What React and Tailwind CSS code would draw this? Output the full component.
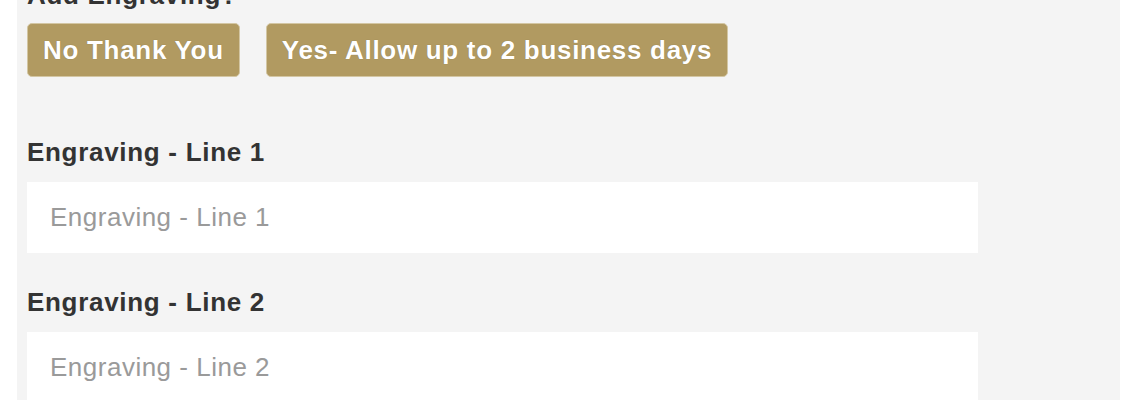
import React from 'react';

const EngravingField = ({ label }) => (
  <div className="mb-[34px]">
    <label className="block text-[26px] leading-[30px] font-bold tracking-[0.7px] text-[#333333] mb-[15px]">{label}</label>
    <input
      type="text"
      placeholder={label}
      className="block w-[951px] h-[71px] bg-white pl-[23px] text-[26px] tracking-[0.5px] text-[#555] placeholder:text-[#9a9a9a] outline-none"
    />
  </div>
);

const App = () => {
  return (
    <div className="bg-white min-h-[400px] overflow-hidden" style={{ fontFamily: '"Liberation Sans", Arial, sans-serif' }}>
      <div className="ml-[17px] w-[1103px] bg-[#f4f4f4] pl-[10px] pb-10 -mt-[20px]">
        <div className="text-[26px] leading-[30px] font-bold tracking-[0.7px] text-[#333333] mb-[13px]">Add Engraving?</div>

        <div className="flex gap-[26px] mb-[60px]">
          <button className="h-[54px] px-[15px] rounded-[5px] border border-[#d3c6a3] bg-[#b19a61] text-white text-[26px] font-bold tracking-[0.7px] [text-shadow:0_0_1px_rgba(0,0,0,0.25)]">
            No Thank You
          </button>
          <button className="h-[54px] px-[15px] rounded-[5px] border border-[#d3c6a3] bg-[#b19a61] text-white text-[26px] font-bold tracking-[0.7px] [text-shadow:0_0_1px_rgba(0,0,0,0.25)]">
            Yes- Allow up to 2 business days
          </button>
        </div>

        <EngravingField label="Engraving - Line 1" />
        <EngravingField label="Engraving - Line 2" />
      </div>
    </div>
  );
};

export default App;
